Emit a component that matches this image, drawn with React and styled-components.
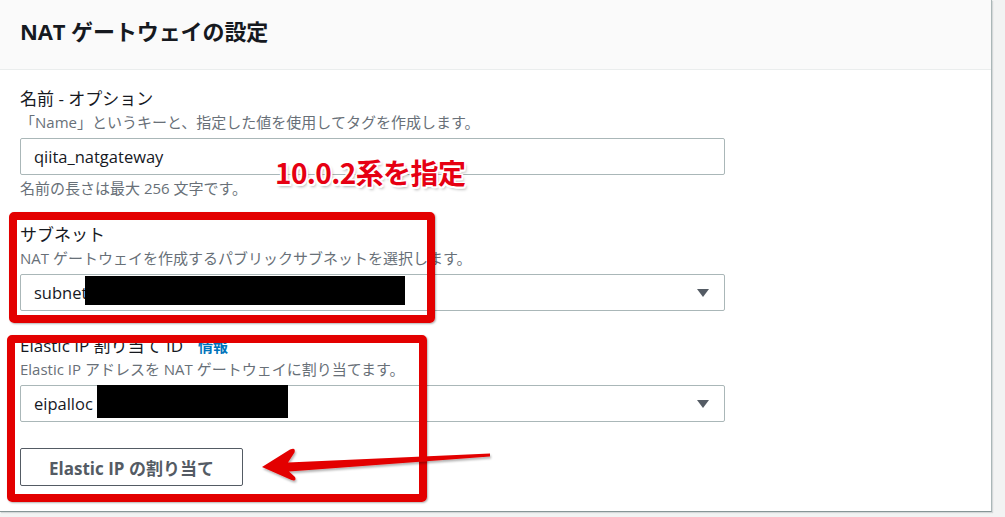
import React from "react";
import styled, { createGlobalStyle } from "styled-components";

const Global = createGlobalStyle`
  html, body { margin: 0; padding: 0; background: #f2f3f3; }
  body { font-family: "Open Sans", "Noto Sans CJK JP", sans-serif; color: #16191f; }
`;

const Page = styled.div`
  width: 1005px;
  height: 517px;
  background: #f2f3f3;
  overflow: hidden;
`;

const Panel = styled.section`
  position: relative;
  width: 991px;
  background: #fff;
  border-right: 1px solid #aab7b8;
  border-bottom: 1px solid #879596;
  box-shadow: 1px 1px 1px rgba(0, 28, 36, 0.12);
`;

const Header = styled.header`
  background: #fafafa;
  border-bottom: 1px solid #eaeded;
  height: 70px;
  box-sizing: border-box;
  padding: 16px 20px 0;
`;

const Title = styled.h2`
  margin: 0;
  font-size: 22px;
  line-height: 30px;
  font-weight: 700;
  color: #16191f;
  letter-spacing: -0.1px;
`;

const Body = styled.div`
  padding: 18px 20px 25px;
  display: flex;
  flex-direction: column;
  align-items: flex-start;
`;

const Field = styled.div`
  margin-top: ${(p) => p.$gap || 0}px;
  display: flex;
  flex-direction: column;
  width: 705px;
`;

const Label = styled.div`
  font-size: 17px;
  line-height: 22px;
  color: #16191f;
  display: flex;
  align-items: baseline;
  gap: 15px;
`;

const InfoLink = styled.span`
  font-size: 15px;
  font-weight: 700;
  color: #0073bb;
`;

const Desc = styled.div`
  margin-top: 2px;
  font-size: 15px;
  line-height: 20px;
  color: #687078;
  white-space: nowrap;
`;

const Hint = styled(Desc)`
  margin-top: 3px;
`;

const Box = styled.div`
  position: relative;
  margin-top: 6px;
  height: 37px;
  box-sizing: border-box;
  border: 1px solid #aab7b8;
  border-radius: 2px;
  padding: 0 15px 0 13px;
  display: flex;
  align-items: center;
  justify-content: space-between;
  font-size: 16.5px;
  color: #16191f;
  background: #fff;
`;

const Caret = styled.span`
  width: 0;
  height: 0;
  border-left: 6.5px solid transparent;
  border-right: 6.5px solid transparent;
  border-top: 8px solid #545b64;
  margin-top: 1px;
`;

const Redact = styled.span`
  position: absolute;
  left: ${(p) => p.$left}px;
  top: ${(p) => p.$top}px;
  width: ${(p) => p.$w}px;
  height: ${(p) => p.$h}px;
  background: #000;
`;

const Button = styled.button`
  margin-top: 26px;
  height: 38px;
  width: 223px;
  border: 1px solid #545b64;
  border-radius: 2px;
  background: #fff;
  color: #545b64;
  font-family: "Open Sans", "Noto Sans CJK JP", sans-serif;
  font-weight: 700;
  font-size: 17px;
  padding: 0;
`;

const RedFrame = styled.div`
  position: absolute;
  left: ${(p) => p.$x}px;
  top: ${(p) => p.$y}px;
  width: ${(p) => p.$w}px;
  height: ${(p) => p.$h}px;
  box-sizing: border-box;
  border: 8px solid #e30000;
  border-radius: 5px;
  box-shadow: 1px 1px 2px rgba(0, 0, 0, 0.3);
  pointer-events: none;
`;

const Note = styled.div`
  position: absolute;
  left: 275px;
  top: 152px;
  font-family: "Noto Sans CJK JP", sans-serif;
  font-size: 28px;
  line-height: 40px;
  font-weight: 700;
  color: #e60012;
  letter-spacing: -0.6px;
  text-shadow: 1.5px 0 0 #fff, -1.5px 0 0 #fff, 0 1.5px 0 #fff, 0 -1.5px 0 #fff,
    1.5px 1.5px 0 #fff, -1.5px -1.5px 0 #fff, 1.5px -1.5px 0 #fff,
    -1.5px 1.5px 0 #fff, 2px 3px 3px rgba(0, 0, 0, 0.3);
`;

const ArrowLayer = styled.svg`
  position: absolute;
  left: 0;
  top: 0;
  pointer-events: none;
`;

export default function App() {
  return (
    <Page>
      <Global />
      <Panel>
        <Header>
          <Title>NAT ゲートウェイの設定</Title>
        </Header>
        <Body>
          <Field>
            <Label>名前 - オプション</Label>
            <Desc>「Name」というキーと、指定した値を使用してタグを作成します。</Desc>
            <Box>qiita_natgateway</Box>
            <Hint>名前の長さは最大 256 文字です。</Hint>
          </Field>
          <Field $gap={26}>
            <Label>サブネット</Label>
            <Desc>NAT ゲートウェイを作成するパブリックサブネットを選択します。</Desc>
            <Box>
              <span>subnet</span>
              <Caret />
              <Redact $left={64} $top={1} $w={320} $h={29} />
            </Box>
          </Field>
          <Field $gap={24}>
            <Label>
              <span>Elastic IP 割り当て ID</span>
              <InfoLink>情報</InfoLink>
            </Label>
            <Desc>Elastic IP アドレスを NAT ゲートウェイに割り当てます。</Desc>
            <Box>
              <span>eipalloc</span>
              <Caret />
              <Redact $left={76} $top={-1} $w={191} $h={33} />
            </Box>
          </Field>
          <Button>Elastic IP の割り当て</Button>
        </Body>

        <Note>10.0.2系を指定</Note>
        <RedFrame $x={9} $y={212} $w={426} $h={111} />
        <RedFrame $x={7} $y={335} $w={420} $h={167} />
        <ArrowLayer width="991" height="512" viewBox="0 0 991 512">
          <defs>
            <filter id="sh" x="-10%" y="-50%" width="120%" height="200%">
              <feDropShadow dx="1" dy="2" stdDeviation="1.2" floodColor="#000" floodOpacity="0.3" />
            </filter>
          </defs>
          <path
            d="M262 467 L290 449.5 Q296 447 294.5 452.5 L288 462.5 L490 453.5 L490 456.5 L289 471.5 L295 477 Q297 481.5 291.5 480 Z"
            fill="#e30000"
            filter="url(#sh)"
          />
        </ArrowLayer>
      </Panel>
    </Page>
  );
}
